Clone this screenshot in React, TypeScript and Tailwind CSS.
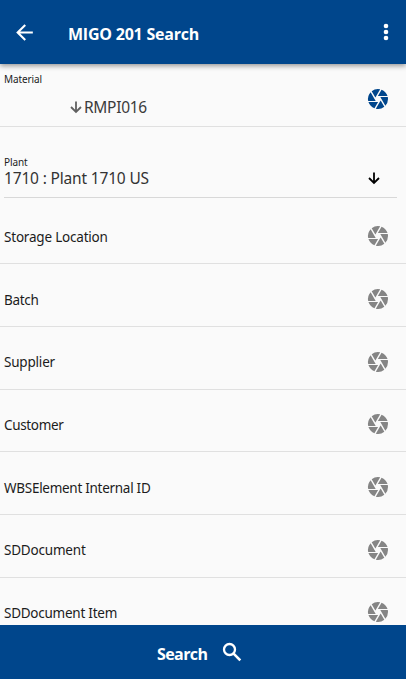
import type { ReactNode } from "react";
import { MdArrowBack, MdCamera } from "react-icons/md";

type Field = { label: string; tracking: string; height: string; textGap: string; iconGap: string };

const fields: Field[] = [
  { label: "Storage Location", tracking: "tracking-[-0.2px]", height: "h-[66px]", textGap: "mb-4", iconGap: "mb-[15px]" },
  { label: "Batch", tracking: "tracking-[-0.3px]", height: "h-[63px]", textGap: "mb-4", iconGap: "mb-[15px]" },
  { label: "Supplier", tracking: "tracking-[-0.2px]", height: "h-[63px]", textGap: "mb-[17px]", iconGap: "mb-[15px]" },
  { label: "Customer", tracking: "tracking-[-0.35px]", height: "h-[62px]", textGap: "mb-4", iconGap: "mb-[15px]" },
  { label: "WBSElement Internal ID", tracking: "tracking-[-0.28px]", height: "h-[63px]", textGap: "mb-4", iconGap: "mb-[15px]" },
  { label: "SDDocument", tracking: "tracking-[-0.2px]", height: "h-[63px]", textGap: "mb-[17px]", iconGap: "mb-[15px]" },
  { label: "SDDocument Item", tracking: "tracking-[-0.25px]", height: "h-[63px]", textGap: "mb-[17px]", iconGap: "mb-4" },
];

function Row({ height, children }: { height: string; children: ReactNode }) {
  return (
    <div className={`flex shrink-0 items-end justify-between border-b border-[#e0e0e0] pl-1 pr-4 ${height}`}>
      {children}
    </div>
  );
}

function DownArrow({ className }: { className: string }) {
  return (
    <svg viewBox="0 0 16 16" className={className} fill="none" stroke="currentColor" strokeWidth="1.8">
      <path d="M8 2.5v10M3 8l5 5 5-5" />
    </svg>
  );
}

export default function App() {
  return (
    <div className="flex h-[679px] w-[406px] flex-col overflow-hidden bg-[#fafafa] font-['Noto_Sans','Open_Sans',sans-serif] text-[#1c1c1c]">
      <header className="z-10 flex h-16 shrink-0 items-center bg-[#00468c] pl-3 pr-2 text-white shadow-[0_2px_5px_rgba(0,0,0,0.4)]">
        <MdArrowBack className="size-[25px]" />
        <h1 className="ml-[31px] mt-[3px] grow whitespace-nowrap font-['Open_Sans',sans-serif] text-base font-bold tracking-[-0.23px]">MIGO 201 Search</h1>
        <svg viewBox="0 0 24 24" className="size-6" fill="currentColor">
          <circle cx="12" cy="6" r="2.3" />
          <circle cx="12" cy="12" r="2.3" />
          <circle cx="12" cy="18" r="2.3" />
        </svg>
      </header>

      <main className="flex min-h-0 grow flex-col overflow-hidden whitespace-nowrap">
        <section className="flex h-[63px] shrink-0 justify-between border-b border-[#e0e0e0] pl-1 pr-4">
          <div>
            <div className="mt-2 text-[10px] leading-[14px] tracking-[-0.1px]">Material</div>
            <div className="ml-[64px] mt-[11px] flex h-5 items-center text-[15.5px] leading-5 text-[#3c3c3c]">
              <DownArrow className="size-4 text-[#606060]" />
              <span className="tracking-[-0.3px]">RMPI016</span>
            </div>
          </div>
          <MdCamera className="mt-[23px] size-6 text-[#00468c]" />
        </section>

        <section className="ml-1 mr-[9px] flex h-[71px] shrink-0 items-end justify-between border-b border-[#d8d8d8]">
          <div className="mb-[9px]">
            <div className="text-[10px] leading-[14px] tracking-[-0.1px]">Plant</div>
            <div className="text-[15.5px] leading-[19px] tracking-[-0.17px] text-[#333]">1710 : Plant 1710 US</div>
          </div>
          <DownArrow className="mb-[11px] mr-[15px] size-4 text-black" />
        </section>

        {fields.map((field) => (
          <Row key={field.label} height={field.height}>
            <span className={`text-[13.5px] leading-5 ${field.textGap} ${field.tracking}`}>{field.label}</span>
            <MdCamera className={`size-6 text-[#858585] ${field.iconGap}`} />
          </Row>
        ))}
      </main>

      <footer className="flex h-[54px] shrink-0 items-center bg-[#00468c] pl-[157px] text-white">
        <span className="mt-1 w-[51px] whitespace-nowrap font-['Open_Sans',sans-serif] text-base font-bold tracking-[-0.6px]">Search</span>
        <svg viewBox="0 0 24 24" className="ml-3 size-6" fill="none" stroke="currentColor" strokeWidth="2.3">
          <circle cx="9.5" cy="9.5" r="5.5" />
          <path d="M13.6 13.6l6.7 6.7" strokeWidth="2.6" />
        </svg>
      </footer>
    </div>
  );
}
